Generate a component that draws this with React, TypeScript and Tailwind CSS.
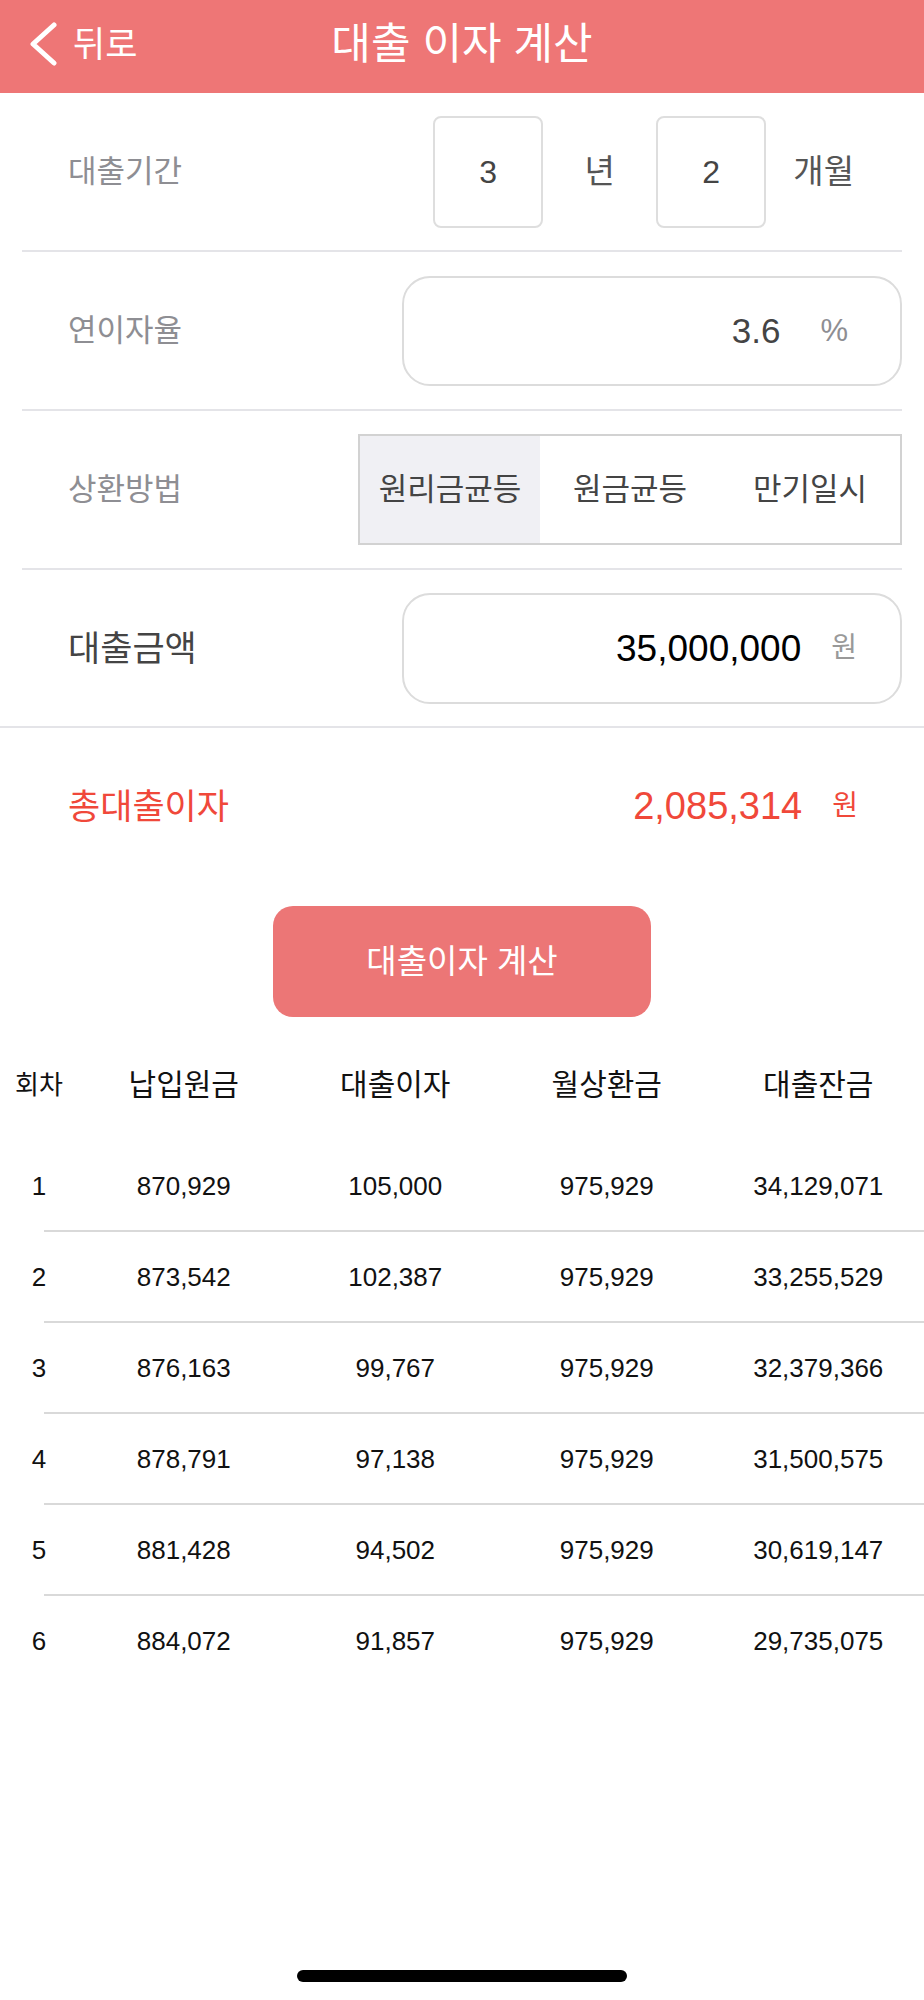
import React from "react"

const rows = [
  ["1", "870,929", "105,000", "975,929", "34,129,071"],
  ["2", "873,542", "102,387", "975,929", "33,255,529"],
  ["3", "876,163", "99,767", "975,929", "32,379,366"],
  ["4", "878,791", "97,138", "975,929", "31,500,575"],
  ["5", "881,428", "94,502", "975,929", "30,619,147"],
  ["6", "884,072", "91,857", "975,929", "29,735,075"],
]

function Header() {
  return (
    <header className="h-[93px] bg-[#ee7676] grid grid-cols-[1fr_auto_1fr] items-center pb-[5px] text-white">
      <button className="flex items-center gap-[16px] pl-[29px] text-[35px] leading-none">
        <svg width="28" height="44" viewBox="0 0 28 44" fill="none">
          <polyline points="25,3 4,22 25,41" stroke="white" strokeWidth="5" strokeLinecap="round" strokeLinejoin="round" />
        </svg>
        <span>뒤로</span>
      </button>
      <h1 className="text-[43px] leading-none">대출 이자 계산</h1>
      <div />
    </header>
  )
}

export default function App() {
  const segments = ["원리금균등", "원금균등", "만기일시"]

  return (
    <div className="min-h-[2000px] flex flex-col bg-white font-['Liberation_Sans','Noto_Sans_CJK_KR',sans-serif]">
      <Header />

      {/* 대출기간 */}
      <div className="mx-[22px] h-[159px] border-b-2 border-[#e4e4e8] flex items-center">
        <span className="pl-[46px] text-[31px] text-[#8e8e93] leading-none">대출기간</span>
        <div className="ml-auto flex items-center pr-[48px]">
          <div className="w-[110px] h-[112px] border-2 border-[#dedede] rounded-[8px] flex items-center justify-center text-[32px] text-[#444]">3</div>
          <span className="w-[113px] text-center text-[33px] text-[#555] leading-none">년</span>
          <div className="w-[110px] h-[112px] border-2 border-[#dedede] rounded-[8px] flex items-center justify-center text-[32px] text-[#444]">2</div>
          <span className="ml-[27px] text-[33px] text-[#555] leading-none">개월</span>
        </div>
      </div>

      {/* 연이자율 */}
      <div className="mx-[22px] h-[159px] border-b-2 border-[#e4e4e8] flex items-center">
        <span className="pl-[46px] text-[31px] text-[#8e8e93] leading-none">연이자율</span>
        <div className="ml-auto w-[500px] h-[110px] border-2 border-[#dcdcdc] rounded-[28px] flex items-center justify-end pr-[52px] gap-[40px]">
          <span className="text-[35px] text-[#444] leading-none">3.6</span>
          <span className="text-[31px] text-[#8e8e93] leading-none">%</span>
        </div>
      </div>

      {/* 상환방법 */}
      <div className="mx-[22px] h-[159px] border-b-2 border-[#e4e4e8] flex items-center">
        <span className="pl-[46px] text-[31px] text-[#8e8e93] leading-none">상환방법</span>
        <div className="ml-auto w-[544px] h-[111px] border-2 border-[#d2d2d2] grid grid-cols-3">
          {segments.map((s, i) => (
            <div
              key={s}
              className={`flex items-center justify-center text-[31px] text-[#444] leading-none ${i === 0 ? "bg-[#f0f0f4]" : "bg-white"}`}
            >
              {s}
            </div>
          ))}
        </div>
      </div>

      {/* 대출금액 */}
      <div className="h-[158px] border-b-2 border-[#e4e4e8] flex items-center pl-[68px] pr-[22px]">
        <span className="text-[35px] text-[#444] leading-none">대출금액</span>
        <div className="ml-auto w-[500px] h-[111px] border-2 border-[#dcdcdc] rounded-[28px] flex items-center justify-end pr-[43px] gap-[30px]">
          <span className="text-[37px] text-black leading-none">35,000,000</span>
          <span className="text-[28px] text-[#999] leading-none">원</span>
        </div>
      </div>

      {/* 총대출이자 */}
      <div className="h-[156px] flex items-center pl-[68px] pr-[66px] text-[#f0483a]">
        <span className="text-[35px] leading-none">총대출이자</span>
        <span className="ml-auto text-[38px] leading-none">2,085,314</span>
        <span className="ml-[30px] text-[28px] leading-none">원</span>
      </div>

      <div className="mt-[22px] flex justify-center">
        <button className="w-[378px] h-[111px] rounded-[20px] bg-[#ec7676] text-white text-[33px] leading-none">
          대출이자 계산
        </button>
      </div>

      {/* 상환 스케줄 */}
      <div className="mt-[12px] h-[112px] flex items-center text-[#111] leading-none">
        <span className="w-[78px] text-center text-[26px]">회차</span>
        <span className="flex-1 text-center text-[30px]">납입원금</span>
        <span className="flex-1 text-center text-[30px]">대출이자</span>
        <span className="flex-1 text-center text-[30px]">월상환금</span>
        <span className="flex-1 text-center text-[30px]">대출잔금</span>
      </div>

      {rows.map((r, i) => (
        <div key={r[0]}>
          <div className="h-[89px] flex items-center text-[26px] text-[#111] leading-none">
            <span className="w-[78px] text-center">{r[0]}</span>
            {r.slice(1).map((v, j) => (
              <span key={j} className="flex-1 text-center">{v}</span>
            ))}
          </div>
          {i < rows.length - 1 && <div className="ml-[44px] h-[2px] bg-[#d9d9d9]" />}
        </div>
      ))}

      <div className="mt-auto mb-[18px] flex justify-center">
        <div className="w-[330px] h-[12px] rounded-full bg-black" />
      </div>
    </div>
  )
}
